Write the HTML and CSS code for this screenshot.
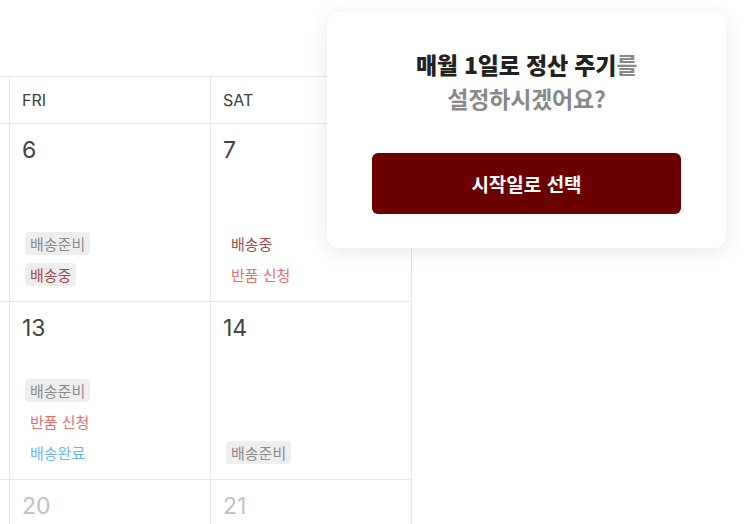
FILE: index.html
```html
<!DOCTYPE html>
<html lang="ko">

<head>
    <meta charset="UTF-8">
    <meta name="viewport" content="width=device-width, initial-scale=1.0">
    <title>정산 주기 설정</title>
    <link rel="stylesheet" href="styles.css">
</head>

<body>
    <div class="page">
        <div class="calendar">
            <!-- header row -->
            <div class="head-cell edge"></div>
            <div class="head-cell">FRI</div>
            <div class="head-cell">SAT</div>

            <!-- week 1 -->
            <div class="day edge"></div>
            <div class="day">
                <span class="date">6</span>
                <div class="tags">
                    <span class="tag tag-ready">배송준비</span>
                    <span class="tag tag-shipping boxed">배송중</span>
                </div>
            </div>
            <div class="day">
                <span class="date">7</span>
                <div class="tags">
                    <span class="tag tag-shipping">배송중</span>
                    <span class="tag tag-return">반품 신청</span>
                </div>
            </div>

            <!-- week 2 -->
            <div class="day edge"></div>
            <div class="day">
                <span class="date">13</span>
                <div class="tags">
                    <span class="tag tag-ready">배송준비</span>
                    <span class="tag tag-return">반품 신청</span>
                    <span class="tag tag-done">배송완료</span>
                </div>
            </div>
            <div class="day">
                <span class="date">14</span>
                <div class="tags">
                    <span class="tag tag-ready">배송준비</span>
                </div>
            </div>

            <!-- week 3 -->
            <div class="day edge"></div>
            <div class="day faded"><span class="date">20</span></div>
            <div class="day faded"><span class="date">21</span></div>
        </div>

        <!-- settlement popup -->
        <div class="popup">
            <p class="popup-title">
                <strong>매월 1일로 정산 주기</strong>를<br>
                설정하시겠어요?
            </p>
            <button type="button" class="popup-btn">시작일로 선택</button>
        </div>
    </div>
</body>

</html>
```

FILE: styles.css
```css
* {
    box-sizing: border-box;
}

body {
    font-family: Inter, "Noto Sans CJK KR", sans-serif;
    background-color: #fff;
    margin: 0;
    padding: 0;
}

.page {
    position: relative;
    height: 100vh;
    overflow: hidden;
}

.calendar {
    display: grid;
    grid-template-columns: 10px 201px 201px;
    margin-top: 76px;
    width: 412px;
    border-top: 1px solid #e8e8e8;
}

.head-cell {
    height: 47px;
    padding-left: 12px;
    display: flex;
    align-items: center;
    font-size: 16px;
    color: #3c3c3c;
    border-right: 1px solid #e8e8e8;
    border-bottom: 1px solid #e8e8e8;
}

.day {
    height: 178px;
    padding: 13px 12px 15px;
    display: flex;
    flex-direction: column;
    justify-content: space-between;
    border-right: 1px solid #e8e8e8;
    border-bottom: 1px solid #e8e8e8;
}

.edge {
    padding: 0;
}

.date {
    font-size: 23px;
    color: #444;
    line-height: 27px;
}

.faded .date {
    color: #c2c2c2;
}

.tags {
    display: flex;
    flex-direction: column;
    align-items: flex-start;
    gap: 8px;
    padding-left: 3px;
}

.tag {
    font-family: "Noto Sans CJK KR", sans-serif;
    font-size: 15px;
    line-height: 23px;
    height: 23px;
    padding: 0 5px;
    border-radius: 4px;
}

.tag-ready {
    background-color: #eeeeee;
    color: #8a8a8a;
}

.tag-shipping {
    color: #a24b4b;
}

.tag-shipping.boxed {
    background-color: #eeeeee;
}

.tag-return {
    color: #e86e6e;
}

.tag-done {
    color: #6cb6f4;
}

.popup {
    position: absolute;
    top: 12px;
    left: 327px;
    width: 399px;
    padding: 35px 45px 34px;
    background-color: #fff;
    border-radius: 12px;
    box-shadow: 0 4px 20px rgba(0, 0, 0, 0.09);
    text-align: center;
}

.popup-title {
    margin: 0 0 38px;
    font-family: "Noto Sans CJK KR", sans-serif;
    font-size: 23px;
    font-weight: bold;
    line-height: 34px;
    letter-spacing: -0.2px;
    color: #888;
}

.popup-title strong {
    color: #222;
}

.popup-btn {
    width: 100%;
    height: 61px;
    background-color: #6b0000;
    color: #fff;
    border: none;
    border-radius: 6px;
    font-family: "Noto Sans CJK KR", sans-serif;
    font-size: 19px;
    font-weight: bold;
    cursor: pointer;
}
```
